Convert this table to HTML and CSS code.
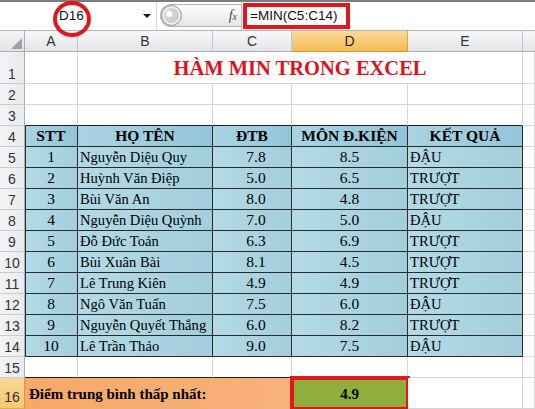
FILE: index.html
```html
<!DOCTYPE html>
<html lang="vi">
<head>
<meta charset="utf-8">
<title>Hàm MIN trong Excel</title>
<link rel="stylesheet" href="styles.css">
</head>
<body>
<div class="app">
  <div class="topline"></div>
  <div class="fbar">
    <div class="namebox"><span class="nbtext">D16</span><span class="dd"></span><span class="ring"></span></div>
    <div class="sep"></div>
    <div class="pill"><span class="knob"></span><span class="fx">f<span class="fxs">x</span></span></div>
    <div class="formula"><span class="fbox">=MIN(C5:C14)</span></div>
  </div>
  <div class="sheet">
    <div class="corner"><span class="tri"></span></div>
    <div class="ch">A</div><div class="ch">B</div><div class="ch">C</div><div class="ch sel">D</div><div class="ch">E</div><div class="ch last"></div>

    <div class="rh">1</div><div class="c"></div><div class="c title">HÀM MIN TRONG EXCEL</div><div class="c"></div>
    <div class="rh">2</div><div class="c"></div><div class="c"></div><div class="c"></div><div class="c"></div><div class="c"></div><div class="c"></div>
    <div class="rh">3</div><div class="c bb"></div><div class="c bb"></div><div class="c bb"></div><div class="c bb"></div><div class="c bb"></div><div class="c"></div>

    <div class="rh">4</div><div class="t th fa">STT</div><div class="t th">HỌ TÊN</div><div class="t th">ĐTB</div><div class="t th">MÔN Đ.KIỆN</div><div class="t th">KẾT QUẢ</div><div class="c"></div>

    <div class="rh">5</div><div class="t fa ctr">1</div><div class="t lft">Nguyễn Diệu Quy</div><div class="t num">7.8</div><div class="t ctr">8.5</div><div class="t lft">ĐẬU</div><div class="c"></div>
    <div class="rh">6</div><div class="t fa ctr">2</div><div class="t lft">Huỳnh Văn Điệp</div><div class="t num">5.0</div><div class="t ctr">6.5</div><div class="t lft">TRƯỢT</div><div class="c"></div>
    <div class="rh">7</div><div class="t fa ctr">3</div><div class="t lft">Bùi Văn An</div><div class="t num">8.0</div><div class="t ctr">4.8</div><div class="t lft">TRƯỢT</div><div class="c"></div>
    <div class="rh">8</div><div class="t fa ctr">4</div><div class="t lft">Nguyễn Diệu Quỳnh</div><div class="t num">7.0</div><div class="t ctr">5.0</div><div class="t lft">ĐẬU</div><div class="c"></div>
    <div class="rh">9</div><div class="t fa ctr">5</div><div class="t lft">Đỗ Đức Toản</div><div class="t num">6.3</div><div class="t ctr">6.9</div><div class="t lft">TRƯỢT</div><div class="c"></div>
    <div class="rh">10</div><div class="t fa ctr">6</div><div class="t lft">Bùi Xuân Bài</div><div class="t num">8.1</div><div class="t ctr">4.5</div><div class="t lft">TRƯỢT</div><div class="c"></div>
    <div class="rh">11</div><div class="t fa ctr">7</div><div class="t lft">Lê Trung Kiên</div><div class="t num">4.9</div><div class="t ctr">4.9</div><div class="t lft">TRƯỢT</div><div class="c"></div>
    <div class="rh">12</div><div class="t fa ctr">8</div><div class="t lft">Ngô Văn Tuấn</div><div class="t num">7.5</div><div class="t ctr">6.0</div><div class="t lft">ĐẬU</div><div class="c"></div>
    <div class="rh">13</div><div class="t fa ctr">9</div><div class="t lft">Nguyễn Quyết Thắng</div><div class="t num">6.0</div><div class="t ctr">8.2</div><div class="t lft">TRƯỢT</div><div class="c"></div>
    <div class="rh">14</div><div class="t fa ctr">10</div><div class="t lft">Lê Trần Thảo</div><div class="t num">9.0</div><div class="t ctr">7.5</div><div class="t lft">ĐẬU</div><div class="c"></div>

    <div class="rh">15</div><div class="c bb"></div><div class="c bb"></div><div class="c bb"></div><div class="c"></div><div class="c"></div><div class="c"></div>
    <div class="rh sel">16</div><div class="c lbl">Điểm trung bình thấp nhất:</div><div class="c res">4.9</div><div class="c"></div><div class="c"></div>
  </div>
</div>
</body>
</html>
```
FILE: styles.css
```css
* { box-sizing: border-box; margin: 0; padding: 0; }
html, body { width: 535px; height: 409px; overflow: hidden; background: #ffffff; }
body { font-family: "Liberation Sans", Arial, sans-serif; }

.app { width: 535px; height: 409px; overflow: hidden; }

.topline { height: 2px; background: #7c7c7c; }

.fbar {
  display: flex;
  height: 29px;
  border-bottom: 1px solid #b4b8bd;
  background: #ffffff;
}

.namebox {
  position: relative;
  width: 153px;
  display: flex;
  align-items: center;
  padding-left: 59px;
  padding-right: 2px;
  font-size: 13.5px;
  color: #111;
}
.nbtext { line-height: 16px; }
.dd {
  margin-left: auto;
  width: 0; height: 0;
  border-left: 4px solid transparent;
  border-right: 4px solid transparent;
  border-top: 4px solid #1a1a1a;
}
.ring {
  position: absolute;
  left: 53px; top: -1px;
  width: 38px; height: 36px;
  border: 4px solid #e2161d;
  border-radius: 50%;
}

.sep {
  width: 7px;
  background: linear-gradient(to right, #ffffff 0 3px, #dcdcdc 3px 4px, #ffffff 4px);
}

.pill {
  width: 81px;
  height: 23px;
  margin-top: 2px;
  display: flex;
  align-items: center;
  border: 1px solid #b3b3b3;
  border-right: none;
  border-radius: 12px 0 0 12px;
  background: linear-gradient(#fdfdfd, #e6e6e6);
}
.knob {
  width: 21px; height: 21px;
  border-radius: 50%;
  border: 1px solid #9a9a9a;
  background: radial-gradient(circle at 38% 42%, #ffffff 0 2px, #d4d4d4 4px, #bdbdbd 100%);
  box-shadow: inset 0 0 0 2px #efefef;
}
.fx {
  margin-left: auto;
  margin-right: 4px;
  font-family: "Liberation Serif", serif;
  font-style: italic;
  font-size: 14px;
  color: #4a4a4a;
}
.fxs { font-size: 10px; }

.formula {
  flex: 1;
  border-left: 1px solid #c4c4c4;
  padding-left: 1px;
  padding-top: 1px;
}
.fbox {
  display: block;
  width: 107px;
  height: 26px;
  border: 4px solid #e2161d;
  padding-left: 3px;
  font-size: 13.5px;
  line-height: 18px;
  color: #111;
}

.sheet {
  display: grid;
  grid-template-columns: 25px 53px 135px 79px 116px 115px 12px;
  grid-template-rows: 21px 32px repeat(14, 21px) 31px;
}

.corner {
  display: flex;
  justify-content: flex-end;
  align-items: flex-end;
  padding: 0 2px 2px 0;
  background: linear-gradient(#f4f5f7, #e2e4e7);
  border-right: 1px solid #a9afb6;
  border-bottom: 1px solid #a9afb6;
}
.tri {
  width: 0; height: 0;
  border-left: 11px solid transparent;
  border-bottom: 11px solid #9ea3a8;
}

.ch {
  display: flex;
  align-items: center;
  justify-content: center;
  font-size: 14px;
  color: #333;
  background: linear-gradient(#f7f8fa, #e3e6e9);
  border-right: 1px solid #c2c7cd;
  border-bottom: 1px solid #a9afb6;
}
.ch.sel {
  background: linear-gradient(#fbdb99, #f3bb55);
  border-right-color: #e0a33e;
  border-bottom-color: #d89a35;
  color: #222;
}
.ch.last { border-right: none; }

.rh {
  display: flex;
  align-items: flex-end;
  justify-content: center;
  padding-bottom: 1px;
  font-size: 14px;
  color: #333;
  background: linear-gradient(to right, #f3f4f6, #e8eaed);
  border-right: 1px solid #a9afb6;
  border-bottom: 1px solid #c9cdd2;
}
.rh.sel {
  background: linear-gradient(#f9d999, #f5c870);
  border-right-color: #d89a35;
  border-bottom-color: #e2ad55;
  padding-bottom: 3px;
}

.c {
  display: flex;
  align-items: flex-end;
  white-space: nowrap;
  border-right: 1px solid #d6d6d6;
  border-bottom: 1px solid #d6d6d6;
  background: #ffffff;
  font-family: "Liberation Serif", "Times New Roman", serif;
  font-size: 15px;
  color: #000;
}
.c.bb { border-bottom-color: #222; }

.title {
  grid-column: span 4;
  justify-content: center;
  padding-bottom: 3px;
  font-size: 20.5px;
  font-weight: bold;
  color: #e3101b;
  line-height: 24px;
}

.t {
  display: flex;
  align-items: flex-end;
  white-space: nowrap;
  overflow: hidden;
  padding-bottom: 1px;
  font-family: "Liberation Serif", "Times New Roman", serif;
  font-size: 14.6px;
  line-height: 18px;
  color: #000;
  background: linear-gradient(to right, #b3dae6, #a3cedc);
  border-right: 1px solid #2a2a2a;
  border-bottom: 1px solid #2a2a2a;
}
.t.fa { box-shadow: inset 1px 0 0 #2a2a2a; }
.th {
  justify-content: center;
  font-weight: bold;
  font-size: 15.5px;
  background: linear-gradient(to right, #a9d3e2, #93c5d8);
}
.ctr { justify-content: center; font-size: 15.5px; }
.lft { justify-content: flex-start; padding-left: 2px; }
.num { justify-content: center; padding-left: 8px; font-size: 15.5px; }

.lbl {
  grid-column: span 3;
  padding-left: 4px;
  padding-bottom: 6px;
  font-weight: bold;
  font-size: 15px;
  background: linear-gradient(to right, #f6a868, #f7b27a);
  border-right-color: #222;
  border-bottom: none;
}
.res {
  justify-content: center;
  padding-bottom: 6px;
  font-weight: bold;
  font-size: 15px;
  background: #8fae3c;
  outline: 4px solid #e2161d;
  outline-offset: -2px;
  border-bottom: none;
}
```
